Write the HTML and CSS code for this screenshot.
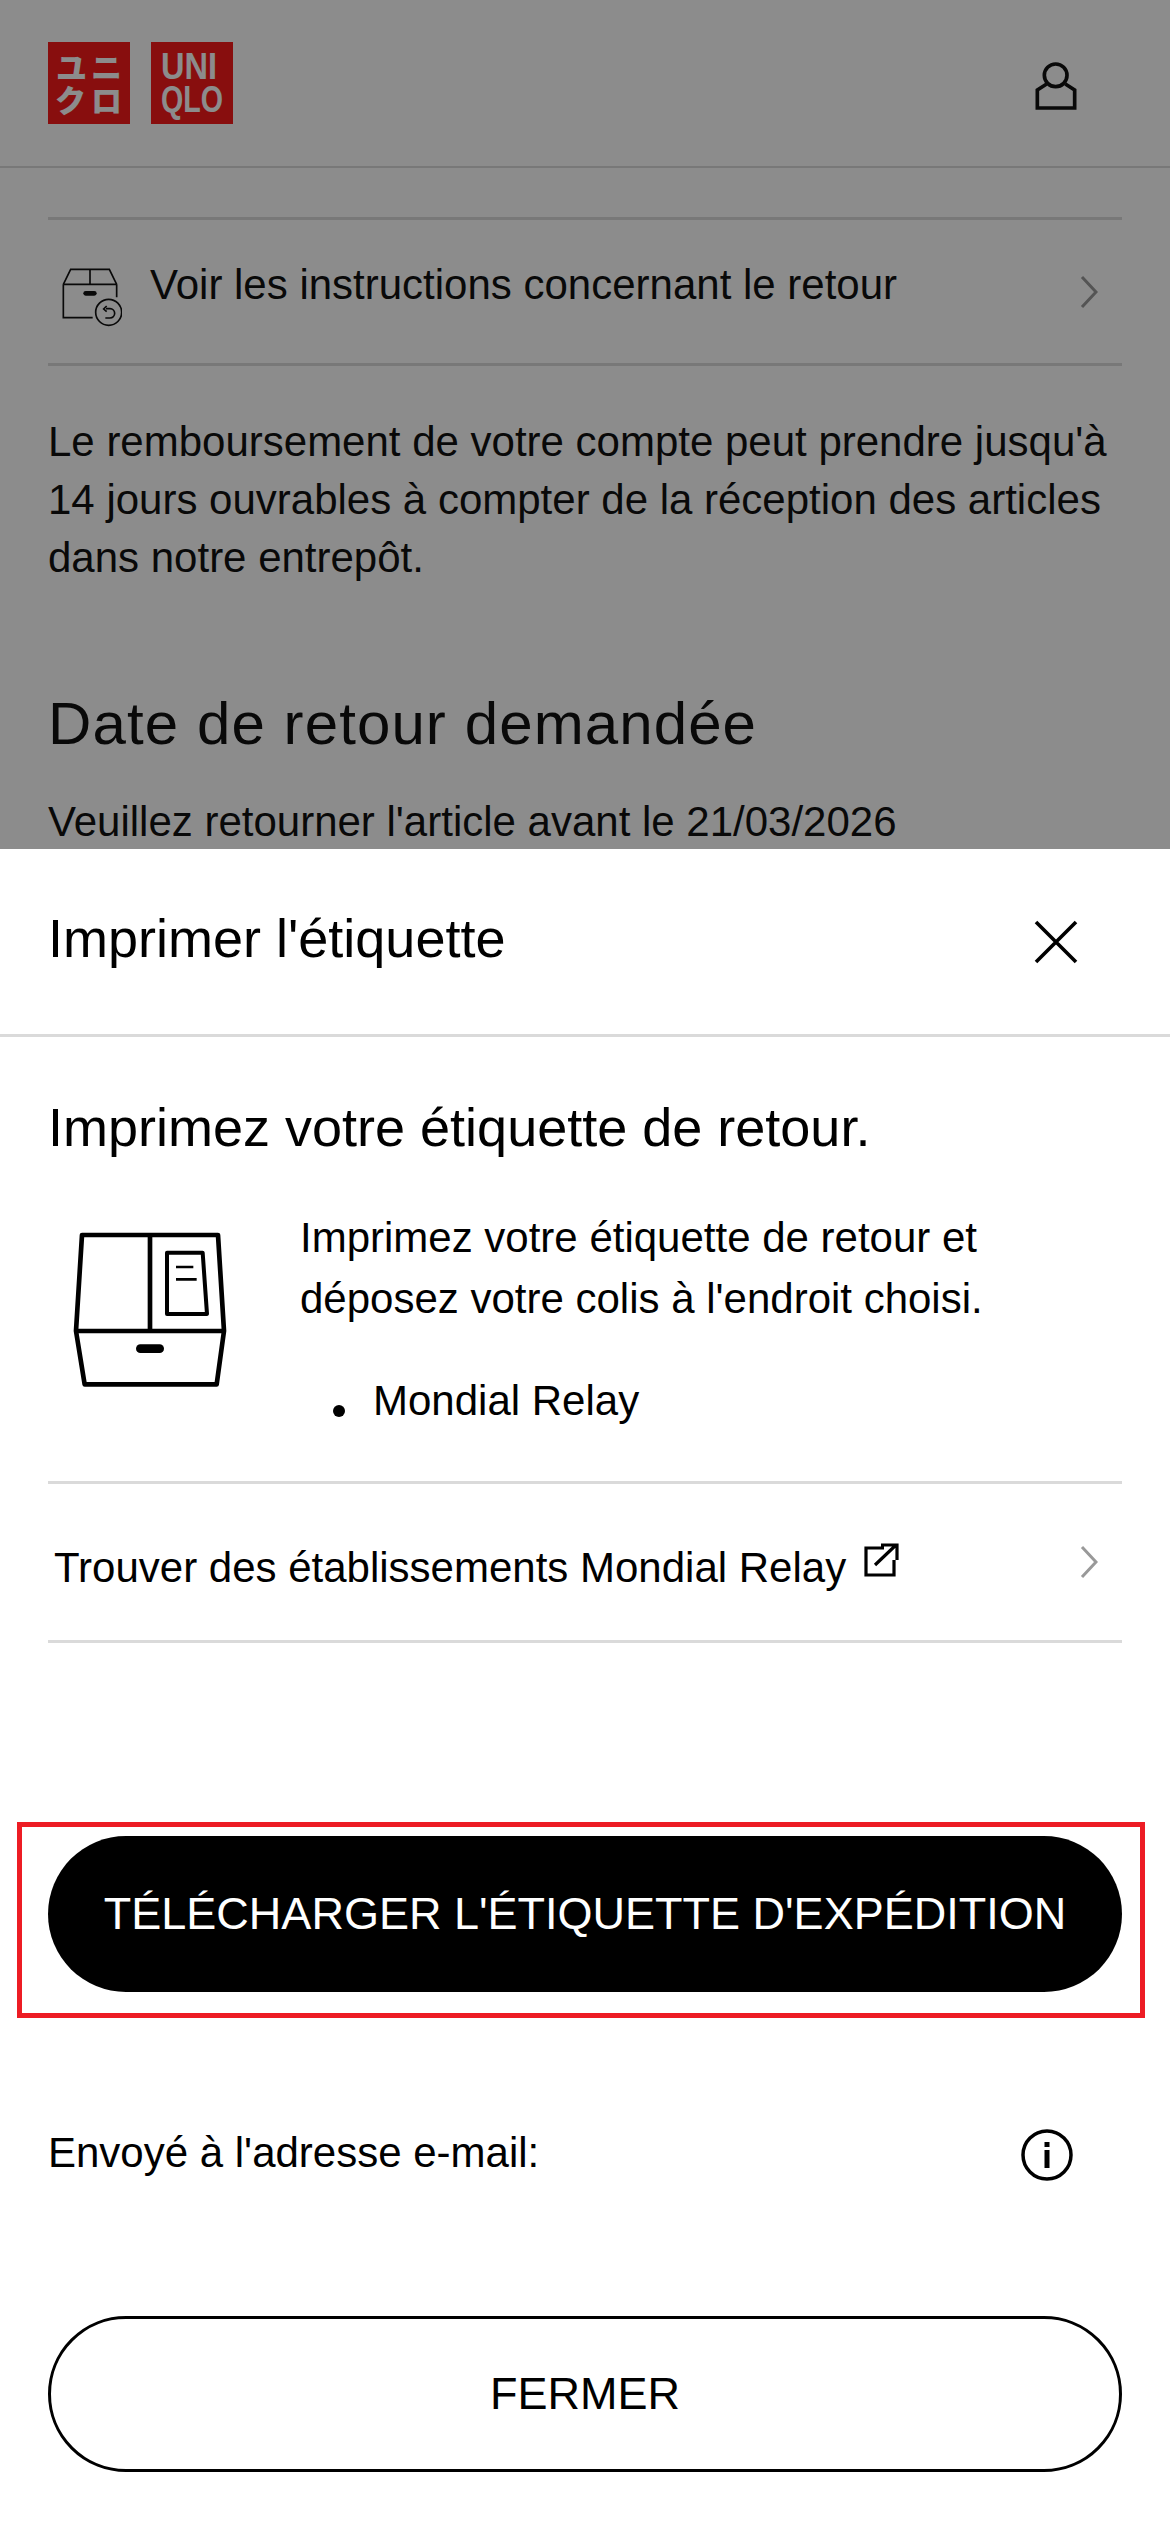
FILE: index.html
```html
<!DOCTYPE html>
<html>
    <head>
        <meta charset="utf-8">
        <link rel="stylesheet" href="styles.css">
    </head>
    <body>
        <div class="page">
            <header class="top">
                <svg class="logo" width="185" height="82" viewBox="0 0 185 82">
                    <rect x="0" y="0" width="82" height="82" fill="#f81a1a"/>
                    <rect x="103" y="0" width="82" height="82" fill="#f81a1a"/>
                    <g class="logo-jp">
                        <text x="23.5" y="37" text-anchor="middle">ユ</text>
                        <text x="58.5" y="37" text-anchor="middle">ニ</text>
                        <text x="22.5" y="70" text-anchor="middle">ク</text>
                        <text x="58.5" y="70" text-anchor="middle">ロ</text>
                    </g>
                    <g class="logo-en">
                        <text x="113" y="37" textLength="56" lengthAdjust="spacingAndGlyphs">UNI</text>
                        <text x="113" y="70" textLength="62" lengthAdjust="spacingAndGlyphs">QLO</text>
                    </g>
                </svg>
                <svg class="user" width="58" height="58" viewBox="0 0 174 174">
                    <circle cx="86" cy="64" r="34" fill="none" stroke="#111" stroke-width="11"/>
                    <path d="M59 90 31 108V162H143V108L115 90" fill="none" stroke="#111" stroke-width="11"/>
                </svg>
            </header>
            <div class="back">
                <div class="row row-instr">
                    <svg class="icon-return" width="66" height="66" viewBox="0 0 198 198">
                        <g fill="none" stroke="#111" stroke-width="5">
                            <path d="M22 64 44 19H160L182 64"/>
                            <path d="M22 64H182M102 19V64"/>
                            <path d="M22 64V164H110M182 64V103"/>
                            <circle cx="158" cy="148" r="39"/>
                            <path d="M150 137h12a14 14 0 0 1 0 28h-14"/>
                            <path d="M152 129 143 138 152 146"/>
                        </g>
                        <rect x="82" y="84" width="40" height="14" rx="7" fill="#111"/>
                    </svg>
                    <span class="row-text">Voir les instructions concernant le retour</span>
                    <svg class="chev" width="18" height="34" viewBox="0 0 18 34"><path d="M2 2 16 17 2 32" fill="none" stroke="#999" stroke-width="3"/></svg>
                </div>
                <p class="para">Le remboursement de votre compte peut prendre jusqu'à 14 jours ouvrables à compter de la réception des articles dans notre entrepôt.</p>
                <h2 class="date-title">Date de retour demandée</h2>
                <p class="para date-text">Veuillez retourner l'article avant le 21/03/2026</p>
            </div>
        </div>

        <div class="overlay"></div>

        <div class="sheet">
            <div class="sheet-head">
                <span class="sheet-title">Imprimer l'étiquette</span>
                <svg class="close" width="44" height="44" viewBox="0 0 44 44"><path d="M2 2 42 42M42 2 2 42" stroke="#000" stroke-width="3.6"/></svg>
            </div>
            <div class="sheet-body">
                <h3 class="label-title">Imprimez votre étiquette de retour.</h3>
                <div class="label-info">
                    <svg class="box" width="220" height="220" viewBox="0 0 660 660">
                        <g fill="none" stroke="#000" stroke-linejoin="round">
                            <path d="M126 138H534L552 426 530 586H134L108 426Z" stroke-width="14"/>
                            <path d="M108 426H552M330 138V426" stroke-width="14"/>
                            <path d="M381 191H488L501 375H381Z" stroke-width="12"/>
                            <path d="M408 234H460M408 271H470" stroke-width="8"/>
                        </g>
                        <rect x="288" y="466" width="84" height="26" rx="13"/>
                    </svg>
                    <div class="label-text">
                        <p>Imprimez votre étiquette de retour et<br>déposez votre colis à l'endroit choisi.</p>
                        <ul>
                            <li>Mondial Relay</li>
                        </ul>
                    </div>
                </div>
                <div class="row row-find">
                    <span class="find-text">Trouver des établissements Mondial Relay</span>
                    <svg class="ext" width="36" height="36" viewBox="0 0 36 36">
                        <path d="M20 5H2V32H30V17M11 22 32 2M17 2H33V17" fill="none" stroke="#000" stroke-width="3.2"/>
                    </svg>
                    <svg class="chev" width="18" height="34" viewBox="0 0 18 34"><path d="M2 2 16 17 2 32" fill="none" stroke="#999" stroke-width="3"/></svg>
                </div>
                <div class="btn btn-black">TÉLÉCHARGER L'ÉTIQUETTE D'EXPÉDITION</div>
                <div class="mail">
                    <span class="mail-text">Envoyé à l'adresse e-mail:</span>
                    <svg class="info" width="52" height="52" viewBox="0 0 52 52">
                        <circle cx="26" cy="26" r="24" fill="none" stroke="#000" stroke-width="3.5"/>
                        <rect x="23.5" y="13" width="5" height="5"/>
                        <rect x="23.5" y="21" width="5" height="18"/>
                    </svg>
                </div>
                <div class="btn btn-white">FERMER</div>
            </div>
        </div>

        <div class="mark"></div>
    </body>
</html>
```

FILE: styles.css
```css
html, body {
    margin: 0px;
    padding: 0px;
}
body {
    position: relative;
    width: 1170px;
    height: 2531px;
    overflow: hidden;
    background-color: white;
    font-family: "Liberation Sans", Arial, sans-serif;
    color: #111;
}
p, h2, h3, ul {
    margin: 0px;
    padding: 0px;
    font-weight: normal;
}

/* page behind the dialog */
.top {
    display: flex;
    justify-content: space-between;
    align-items: center;
    height: 166px;
    padding: 0px 48px;
    border-bottom: 2px solid #dadada;
}
.logo-jp text {
    font-family: "Noto Sans CJK JP", sans-serif;
    font-weight: 900;
    font-size: 31px;
    fill: #fff;
}
.logo-en text {
    font-family: "Liberation Sans", sans-serif;
    font-weight: 700;
    font-size: 37px;
    fill: #fff;
}
.user {
    margin-right: 37px;
}
.back {
    padding: 49px 48px 0px;
}
.row {
    display: flex;
    align-items: center;
    border-top: 3px solid #dadada;
    border-bottom: 3px solid #dadada;
}
.row-instr {
    height: 143px;
}
.icon-return {
    margin-left: 8px;
    margin-right: 28px;
    margin-top: 8px;
}
.row-text {
    flex: 1;
    font-size: 42px;
    margin-top: -14px;
}
.chev {
    margin-right: 24px;
    flex: none;
}
.para {
    font-size: 42px;
    line-height: 58px;
    margin-top: 47px;
}
.date-title {
    font-size: 60px;
    line-height: 70px;
    margin-top: 102px;
    letter-spacing: 1.1px;
}
.date-text {
    margin-top: 34px;
}

.overlay {
    position: absolute;
    top: 0px;
    left: 0px;
    right: 0px;
    bottom: 0px;
    background-color: rgba(0, 0, 0, 0.45);
}

/* bottom sheet */
.sheet {
    position: absolute;
    top: 849px;
    left: 0px;
    right: 0px;
    bottom: 0px;
    background-color: white;
    color: #000;
}
.sheet-head {
    display: flex;
    justify-content: space-between;
    align-items: center;
    height: 185px;
    padding: 0px 92px 0px 48px;
    border-bottom: 3px solid #dadada;
}
.sheet-title {
    font-size: 54px;
    margin-top: -8px;
}
.sheet-body {
    padding: 0px 48px;
}
.label-title {
    font-size: 54px;
    line-height: 60px;
    padding-top: 60px;
}
.label-info {
    display: flex;
    align-items: flex-start;
    margin-top: 40px;
}
.box {
    margin-left: -8px;
    margin-right: 40px;
    margin-top: -8px;
    flex: none;
}
.label-text {
    font-size: 42px;
    line-height: 61px;
    padding-top: 10px;
}
.label-text ul {
    list-style: none;
    margin-top: 41px;
}
.label-text li {
    display: flex;
}
.label-text li::before {
    content: "";
    flex: none;
    width: 12px;
    height: 12px;
    border-radius: 50%;
    background-color: black;
    margin: 35px 28px 0px 33px;
}
.row-find {
    height: 156px;
    margin-top: 50px;
}
.find-text {
    font-size: 42px;
    margin-left: 6px;
    margin-top: 12px;
}
.ext {
    margin-left: 18px;
    margin-top: -2px;
}
.row-find .chev {
    margin-left: auto;
}
.btn {
    display: flex;
    align-items: center;
    justify-content: center;
    height: 156px;
    box-sizing: border-box;
    border-radius: 78px;
    font-size: 45px;
}
.btn-black {
    background-color: black;
    color: white;
    margin-top: 193px;
}
.mail {
    display: flex;
    justify-content: space-between;
    align-items: center;
    margin-top: 135px;
    height: 56px;
    font-size: 42px;
    padding-right: 49px;
}
.mail-text {
    margin-top: -4px;
}
.btn-white {
    border: 3px solid black;
    margin-top: 133px;
}

/* red annotation round the button */
.mark {
    position: absolute;
    top: 1822px;
    left: 17px;
    width: 1118px;
    height: 186px;
    border: 5px solid #ed1c24;
}
```
